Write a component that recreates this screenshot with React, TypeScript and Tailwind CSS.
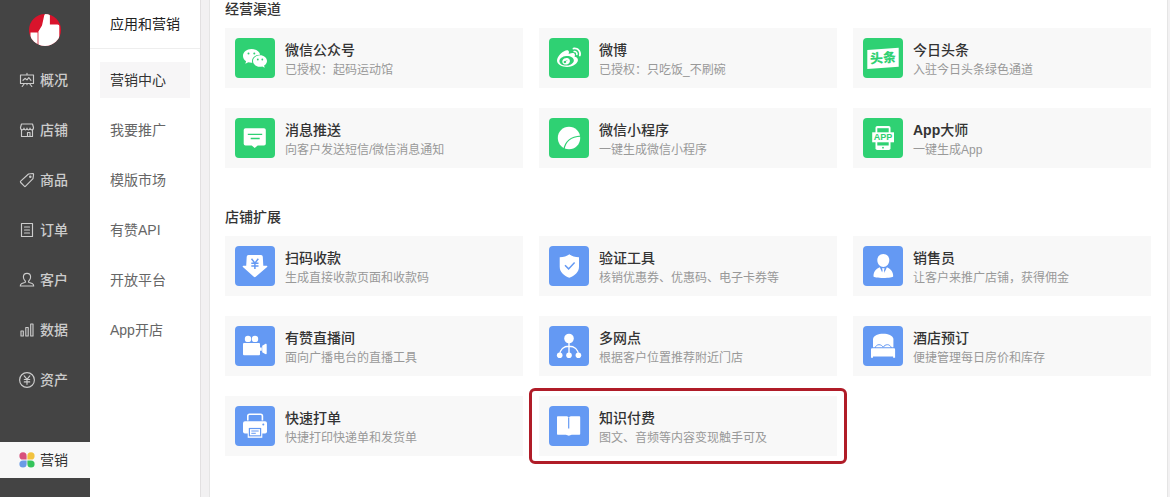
import type { ReactNode } from "react";
import { FaWeibo } from "react-icons/fa";

const GREEN = "#2fd173";
const BLUE = "#6499f3";

type NavItem = { label: string; icon: ReactNode };
type App = { title: ReactNode; desc: string; icon: ReactNode; highlighted?: boolean };

function LineIcon({ children }: { children: ReactNode }) {
  return (
    <svg
      aria-hidden="true"
      viewBox="0 0 16 16"
      className="h-4 w-4 shrink-0"
      fill="none"
      stroke="currentColor"
      strokeWidth="1.15"
      strokeLinejoin="round"
      strokeLinecap="round"
    >
      {children}
    </svg>
  );
}

function Tile({ children }: { children: ReactNode }) {
  return (
    <svg aria-hidden="true" viewBox="0 0 40 40" className="h-10 w-10" fill="#fff">
      {children}
    </svg>
  );
}

const navItems: NavItem[] = [
  {
    label: "概况",
    icon: (
      <LineIcon>
        <path d="M1.5 3h13v8.5h-13zM8 1.3V3M5.5 11.5l-2.3 3M10.5 11.5l2.3 3M8 11.5v1.2" />
        <path d="M4 8.3l2.3-2 1.7 1.6 1.8-2.4L12 8.3" />
      </LineIcon>
    ),
  },
  {
    label: "店铺",
    icon: (
      <LineIcon>
        <path d="M2.5 2h11l1 3.5c0 1.6-.8 2.4-1.8 2.4S11 7 11 6.100c0 1.200-.6 1.800-1.500 1.800S8 7.200 8 6.100c0 1.100-.6 1.800-1.500 1.800S5 7.200 5 6.100C5 7.200 4.400 7.900 3.300 7.900S1.500 7.100 1.500 5.500z" />
        <path d="M2.500 8v6.500h11V8M8.500 14.500v-4H11v4" />
      </LineIcon>
    ),
  },
  {
    label: "商品",
    icon: (
      <LineIcon>
        <path d="M9.500 2l4.200-.5c.6 0 .9.300.9.900L14 6.600 6.600 14.200c-.4.400-.9.400-1.300 0L1.700 10.500c-.4-.4-.4-.9 0-1.300z" />
        <circle cx="11.300" cy="4.700" r="0.700" />
      </LineIcon>
    ),
  },
  {
    label: "订单",
    icon: (
      <LineIcon>
        <path d="M2.500 1.500h11v13h-11zM5.500 5h5M5.500 8h5M5.500 11h5" />
      </LineIcon>
    ),
  },
  {
    label: "客户",
    icon: (
      <LineIcon>
        <path d="M8 1.300c2.200 0 3.600 1.500 3.600 3.800 0 1.700-.7 3-1.800 3.900-.4.400-.3 1.200.4 1.500l3 1c1 .4 1.500 1.200 1.500 2.500H1.300c0-1.300.5-2.100 1.500-2.500l3-1c.7-.3.8-1.100.4-1.500-1.100-.9-1.800-2.200-1.800-3.900 0-2.300 1.400-3.800 3.600-3.800z" />
      </LineIcon>
    ),
  },
  {
    label: "数据",
    icon: (
      <LineIcon>
        <path d="M2 9h2.300v5H2zM6.800 5.500h2.400V14H6.800zM11.700 2H14v12h-2.300z" />
      </LineIcon>
    ),
  },
  {
    label: "资产",
    icon: (
      <LineIcon>
        <circle cx="8" cy="8" r="7.400" />
        <path d="M5.200 3.800L8 7.300l2.800-3.500M8 7.300v5M5.300 7.500h5.400M5.300 9.900h5.400" />
      </LineIcon>
    ),
  },
];

const subItems = ["营销中心", "我要推广", "模版市场", "有赞API", "开放平台", "App开店"];

const channels: App[] = [
  {
    title: "微信公众号",
    desc: "已授权：起码运动馆",
    icon: (
      <Tile>
        <path d="M16.500 11c-4.800 0-8.500 3-8.500 6.900 0 2.200 1.200 4.100 3.100 5.400l-.8 2.500 3-1.500c1 .3 2.100.5 3.200.5h.8c-.2-.6-.3-1.200-.3-1.800 0-3.600 3.400-6.300 7.600-6.300h.6C24.500 13.300 20.900 11 16.500 11z" />
        <path d="M32 23c0-3.200-3.200-5.800-7-5.800s-7 2.600-7 5.800 3.200 5.800 7 5.800c.8 0 1.600-.1 2.300-.3l2.400 1.300-.6-2.200c1.800-1.100 2.900-2.700 2.900-4.600z" />
        <g fill={GREEN}>
          <circle cx="13.500" cy="15.400" r="1" />
          <circle cx="19.300" cy="15.400" r="1" />
          <circle cx="22.800" cy="21.500" r="0.900" />
          <circle cx="27.300" cy="21.500" r="0.900" />
        </g>
      </Tile>
    ),
  },
  {
    title: "微博",
    desc: "已授权：只吃饭_不刷碗",
    icon: <FaWeibo aria-hidden="true" className="h-6 w-6 text-white" />,
  },
  {
    title: "今日头条",
    desc: "入驻今日头条绿色通道",
    icon: (
      <Tile>
        <path d="M4.300 12l31.400-2.300v19L4.300 31z" />
        <text
          x="20"
          y="24.600"
          textAnchor="middle"
          fontSize="13"
          fontWeight="900"
          fill={GREEN}
          transform="rotate(-4 20 20)"
        >
          头条
        </text>
      </Tile>
    ),
  },
  {
    title: "消息推送",
    desc: "向客户发送短信/微信消息通知",
    icon: (
      <Tile>
        <path d="M10.500 10.300h18.500a1.800 1.800 0 0 1 1.800 1.800v13.600a1.800 1.800 0 0 1-1.800 1.800h-6.300l-3 2.500-3-2.500h-6.200a1.800 1.800 0 0 1-1.800-1.800V12.100a1.800 1.800 0 0 1 1.800-1.800z" />
        <path d="M12.800 16.400h14.400M15.700 20.500h9" stroke={GREEN} strokeWidth="1.300" />
      </Tile>
    ),
  },
  {
    title: "微信小程序",
    desc: "一键生成微信小程序",
    icon: (
      <Tile>
        <circle cx="20" cy="20" r="11.200" />
        <path d="M15 31.500c1-7.300 6.500-13 16.800-13.400" fill="none" stroke={GREEN} strokeWidth="1.300" />
      </Tile>
    ),
  },
  {
    title: (
      <>
        <b>App</b>大师
      </>
    ),
    desc: "一键生成App",
    icon: (
      <Tile>
        <rect x="12.500" y="8" width="15" height="24" rx="1.800" />
        <path d="M14.300 10.200h11.400v17.300H14.300z" fill={GREEN} />
        <circle cx="20" cy="29.700" r="0.900" fill={GREEN} />
        <path d="M9.200 14.300h21.800v10H9.200z" />
        <text x="20" y="22.300" textAnchor="middle" fontSize="9" fontWeight="700" fill={GREEN}>
          APP
        </text>
      </Tile>
    ),
  },
];

const extensions: App[] = [
  {
    title: "扫码收款",
    desc: "生成直接收款页面和收款码",
    icon: (
      <Tile>
        <path d="M13.500 9h12.500a1.800 1.800 0 0 1 1.800 1.700l.5 9h3.400c.7 0 .9.700.4 1.200L20.700 30.800c-.6.500-1.300.5-1.900 0L7.900 20.900c-.5-.5-.3-1.200.4-1.200h2.900l.5-9A1.800 1.800 0 0 1 13.500 9z" />
        <path
          d="M16.500 12.800l3.400 4.300 3.400-4.300M19.900 17v6M16.300 17.200h7.200M16.300 20.100h7.200"
          fill="none"
          stroke={BLUE}
          strokeWidth="1.500"
        />
      </Tile>
    ),
  },
  {
    title: "验证工具",
    desc: "核销优惠券、优惠码、电子卡券等",
    icon: (
      <Tile>
        <path d="M20.300 8.300c2.500 2 5.800 3 9.700 3v9.500c0 5.300-4.300 9-9.700 11-5.300-2-9.600-5.700-9.600-11v-9.500c3.900 0 7.200-1 9.600-3z" />
        <path d="M16 19.300l3.600 3.600 6-6.400" fill="none" stroke={BLUE} strokeWidth="1.500" />
      </Tile>
    ),
  },
  {
    title: "销售员",
    desc: "让客户来推广店铺，获得佣金",
    icon: (
      <Tile>
        <path d="M20.300 8c3.500 0 6 2.600 6 6 0 3.800-2.700 7-6 7s-6-3.200-6-7c0-3.400 2.500-6 6-6z" />
        <path d="M16.800 21.300L20.300 29l3.600-7.700c4 1.600 6.300 4.700 6.300 9 0 1.100-4.500 1.700-9.900 1.700s-9.800-.6-9.800-1.700c0-4.300 2.100-7.400 6.300-9z" />
        <path d="M19 22.200h2.600l-.6 2.200 1 3.800-1.700 2.400-1.700-2.400 1-3.800z" />
      </Tile>
    ),
  },
  {
    title: "有赞直播间",
    desc: "面向广播电台的直播工具",
    icon: (
      <Tile>
        <circle cx="13" cy="12.900" r="3.200" />
        <circle cx="20" cy="12.900" r="3.200" />
        <rect x="8" y="17" width="17" height="12.300" rx="1" />
        <path d="M25 21.500h1.800v3.200H25zM27.200 19.800l3-1.900c.7-.4 1.500 0 1.500.8v8.600c0 .8-.8 1.200-1.500.8l-3-1.900z" />
      </Tile>
    ),
  },
  {
    title: "多网点",
    desc: "根据客户位置推荐附近门店",
    icon: (
      <Tile>
        <circle cx="20" cy="12.500" r="4.800" />
        <path
          d="M20 16v13M10.700 29c.3-5.500 4-8.700 9.300-8.700s9.200 3.200 9.500 8.700"
          fill="none"
          stroke="#fff"
          strokeWidth="1.400"
        />
        <circle cx="10.700" cy="29.300" r="2.800" />
        <circle cx="20" cy="29.300" r="2.800" />
        <circle cx="29.400" cy="29.300" r="2.800" />
      </Tile>
    ),
  },
  {
    title: "酒店预订",
    desc: "便捷管理每日房价和库存",
    icon: (
      <Tile>
        <path d="M10 21.300v-8.600C11 9.500 15 7.700 20.200 7.700s9.200 1.800 10.200 5v8.600z" />
        <path
          d="M12 22c.8-2.300 2.200-3.300 4-3.300s3.200 1 4.200 2.500c1-1.500 2.400-2.500 4.200-2.500s3.200 1 4 3.300"
          fill="none"
          stroke={BLUE}
          strokeWidth="1"
        />
        <path d="M9.300 22.300h21.500c.8 0 1.300.5 1.300 1.300v8.100h-2v-1.100H10v1.100H8v-8.100c0-.8.5-1.300 1.300-1.300z" />
      </Tile>
    ),
  },
  {
    title: "快速打单",
    desc: "快捷打印快递单和发货单",
    icon: (
      <Tile>
        <path d="M12.800 14.500V10c0-1 .7-1.800 1.800-1.800h11c1.100 0 1.800.8 1.800 1.800v4.500" fill="none" stroke="#fff" strokeWidth="1.600" />
        <rect x="8" y="15.200" width="24" height="12.300" rx="2" />
        <path d="M12.700 20.800h14.600v11H12.700z" />
        <path d="M13.800 21.900h12.400v8.500H13.800z" fill={BLUE} />
        <path d="M15 23.100h10v6.200H15z" />
        <path d="M16.300 25h7.400M16.300 27.300h4.500" stroke={BLUE} strokeWidth="1" />
        <circle cx="28.300" cy="18.500" r="1" fill={BLUE} />
      </Tile>
    ),
  },
  {
    title: "知识付费",
    desc: "图文、音频等内容变现触手可及",
    highlighted: true,
    icon: (
      <Tile>
        <path d="M9 10.300h7.700c1.400 0 2.500.4 3.100 1.100.6-.7 1.700-1.100 3.100-1.100h7.300c.6 0 1 .4 1 1v16.500c0 .6-.4 1-1 1h-7.500l-2.900 1-2.900-1H9c-.6 0-1-.4-1-1V11.300c0-.6.4-1 1-1z" />
        <path d="M19.700 11.500v11" stroke={BLUE} strokeWidth="1.200" />
      </Tile>
    ),
  },
];

function AppCard({ app, tone }: { app: App; tone: string }) {
  return (
    <a href="#" className="relative flex h-15 gap-2.5 bg-[#f8f8f8] p-2.5">
      <span className={`flex h-10 w-10 shrink-0 items-center justify-center rounded ${tone}`}>{app.icon}</span>
      <span className="min-w-0 whitespace-nowrap">
        <span className="block text-sm leading-6 font-medium text-[#333]">{app.title}</span>
        <span className="block text-xs leading-4 text-[#999]">{app.desc}</span>
      </span>
      {app.highlighted && (
        <span className="pointer-events-none absolute -inset-x-2.5 -inset-y-2 rounded-md border-3 border-[#b01c28]" />
      )}
    </a>
  );
}

function AppSection({ title, apps, tone }: { title: string; apps: App[]; tone: string }) {
  return (
    <section>
      <h2 className="mb-2.5 text-sm leading-[18px] font-medium text-[#333]">{title}</h2>
      <div className="grid grid-cols-3 gap-x-4 gap-y-5">
        {apps.map((app) => (
          <AppCard key={app.desc} app={app} tone={tone} />
        ))}
      </div>
    </section>
  );
}

export default function App() {
  return (
    <div className="flex min-h-screen bg-[#f2f1f2] font-['Liberation_Sans','Noto_Sans_CJK_SC',sans-serif]">
      <nav aria-label="主导航" className="w-[90px] shrink-0 bg-[#444] pt-3.5 text-sm">
        <a href="#" aria-label="首页" className="mx-auto mb-4 block h-8 w-8">
          <svg aria-hidden="true" viewBox="0 0 32 32" className="h-8 w-8">
            <defs>
              <clipPath id="logo-circle">
                <circle cx="16" cy="16" r="16" />
              </clipPath>
            </defs>
            <g clipPath="url(#logo-circle)">
              <path d="M0 0h32v32H0z" fill="#d9142c" />
              <path
                d="M1.500 18.600h7.100V32H1.500zM9.400 32V17.500L13 11.500 15.200 1.500C15.400.5 16 0 17 0h2c1.200 0 1.900.7 1.900 1.900v8.500h7.600c1.100 0 1.800.7 1.800 1.800V32z"
                fill="#fff"
              />
            </g>
          </svg>
        </a>
        <ul className="flex flex-col gap-3.5">
          {navItems.map((item) => (
            <li key={item.label}>
              <a href="#" className="flex h-9 items-center gap-[5px] pl-[19px] font-medium text-[#ccc]">
                {item.icon}
                {item.label}
              </a>
            </li>
          ))}
          <li className="mt-[30px]">
            <a href="#" aria-current="page" className="flex h-9 items-center gap-[5px] bg-[#f8f8f8] pl-[19px] text-[#333]">
              <svg aria-hidden="true" viewBox="0 0 16 16" className="h-4 w-4 shrink-0">
                <path d="M4 .3a3.600 3.600 0 0 1 3.600 3.600v3.600H4A3.600 3.600 0 0 1 4 .3z" fill="#d8517c" />
                <path d="M12 .3a3.600 3.600 0 0 1 0 7.200H8.400V3.900A3.600 3.600 0 0 1 12 .3z" fill="#f2c23e" />
                <path d="M4 8.400h3.600V12A3.600 3.600 0 1 1 4 8.400z" fill="#6a9be6" />
                <path d="M8.400 8.400H12A3.600 3.600 0 1 1 8.400 12z" fill="#35c45c" />
              </svg>
              营销
            </a>
          </li>
        </ul>
      </nav>

      <aside className="w-[111px] shrink-0 border-r border-[#e2e0e1] bg-white text-sm">
        <h1 className="h-[49px] border-b border-[#eee] pl-5 leading-[48px] text-[#222]">应用和营销</h1>
        <ul className="flex flex-col gap-3.5 px-2.5 pt-[13px]">
          {subItems.map((label, i) => (
            <li key={label}>
              <a
                href="#"
                aria-current={i === 0 ? "page" : undefined}
                className={`block h-9 pl-2.5 leading-9 ${i === 0 ? "bg-[#f7f6f7] text-[#333]" : "text-[#666]"}`}
              >
                {label}
              </a>
            </li>
          ))}
        </ul>
      </aside>

      <main className="mr-[2px] ml-2 flex min-w-0 flex-1 flex-col gap-10 border-x border-[#e5e5e5] bg-white pr-4 pb-10 pl-[15px]">
        <AppSection title="经营渠道" apps={channels} tone="bg-[#2fd173]" />
        <AppSection title="店铺扩展" apps={extensions} tone="bg-[#6499f3]" />
      </main>
    </div>
  );
}
